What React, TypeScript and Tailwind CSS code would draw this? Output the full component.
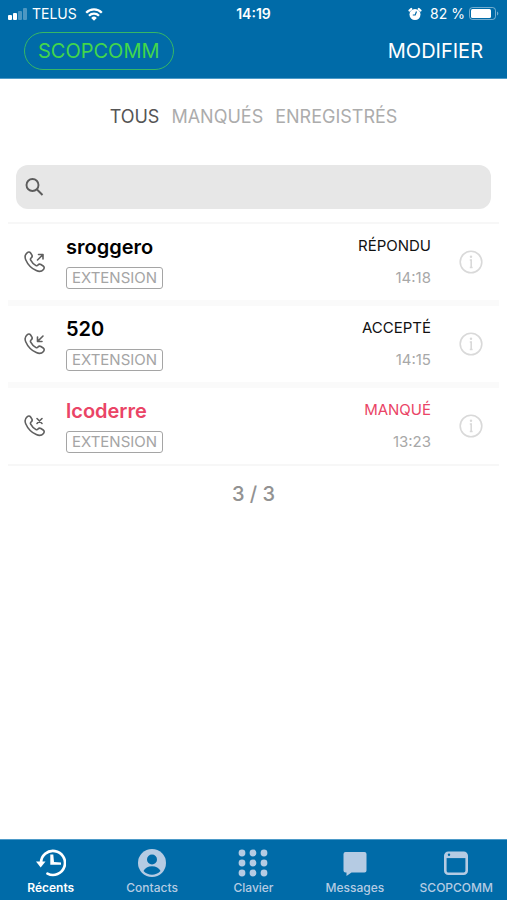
import React from 'react';

type CallKind = 'outgoing' | 'incoming' | 'missed';

interface Call {
  name: string;
  kind: CallKind;
  status: string;
  time: string;
}

const calls: Call[] = [
  { name: 'sroggero', kind: 'outgoing', status: 'RÉPONDU', time: '14:18' },
  { name: '520', kind: 'incoming', status: 'ACCEPTÉ', time: '14:15' },
  { name: 'lcoderre', kind: 'missed', status: 'MANQUÉ', time: '13:23' },
];

// Small mark drawn at the top right of the handset
const callMarks: Record<CallKind, string> = {
  outgoing: 'M13.500 9 19 3.500M14.500 3.500H19V8',
  incoming: 'M19 3l-5.500 5.500M13.500 4v4.500H18',
  missed: 'M13 3.500l5 5M18 3.500l-5 5',
};

const CallIcon: React.FC<{ kind: CallKind }> = ({ kind }) => (
  <svg viewBox="0 0 22 22" className="h-[22px] w-[22px] text-[#606060]" fill="none" stroke="currentColor" strokeWidth="1.600" strokeLinecap="round" strokeLinejoin="round" aria-hidden="true">
    <path d="M3.100 1.800C4.300.8 5.700.8 6.600 2l1.200 1.900c.7 1.200.4 2.200-.6 3-.9.7-1 1.300-.5 2.200 1.200 2.300 2.800 4 5 5.300.9.6 1.600.5 2.300-.4.8-1 1.800-1.200 2.900-.5l2.300 1.500c1.200.8 1.300 2.200.3 3.400-1.900 2.300-4.400 2.500-7.200 1.200C7.600 17.500 3.600 13.100 1.700 8.700.6 6 1 3.600 3.100 1.800Z" />
    <path d={callMarks[kind]} />
  </svg>
);

/* Status bar */
const StatusBar: React.FC = () => (
  <div className="grid h-7 grid-cols-3 items-center px-2 text-sm leading-5">
    <div className="flex items-center gap-1">
      <svg viewBox="0 0 20 12" className="h-3 w-5" fill="currentColor" aria-hidden="true">
        <rect x="0" y="7" width="4" height="5" rx="1" />
        <rect x="5" y="5" width="4" height="7" rx="1" />
        <rect x="10" y="3" width="4" height="9" rx="1" opacity=".3" />
        <rect x="15" y="0" width="4" height="12" rx="1" opacity=".3" />
      </svg>
      <span>TELUS</span>
      <svg viewBox="0 0 18 13" className="ml-1 h-[13px] w-[18px]" fill="none" stroke="currentColor" strokeWidth="2.300" aria-hidden="true">
        <path d="M1.200 4.700a11 11 0 0 1 15.600 0" />
        <path d="M4 7.700a7.100 7.100 0 0 1 10 0" />
        <path d="M9 12.700 6.200 9.900a4 4 0 0 1 5.600 0Z" fill="currentColor" stroke="none" />
      </svg>
    </div>
    <span className="text-center font-semibold">14:19</span>
    <div className="flex items-center justify-end gap-1">
      <svg viewBox="0 0 14 14" className="mr-1 h-[14px] w-[14px]" aria-hidden="true">
        <circle cx="7" cy="7.500" r="5.500" fill="currentColor" />
        <path d="M1.500 3.500 3.200 2M12.500 3.500 10.800 2" stroke="currentColor" strokeWidth="2.200" strokeLinecap="round" />
        <path d="M8.500 4.500 7.200 8H4.800" fill="none" stroke="#006ba8" strokeWidth="1.200" />
      </svg>
      <span className="whitespace-nowrap">82 %</span>
      <svg viewBox="0 0 30 14" className="h-[14px] w-[30px]" aria-hidden="true">
        <rect x=".5" y=".5" width="26" height="12" rx="3" fill="none" stroke="currentColor" opacity=".45" />
        <rect x="2" y="2" width="20" height="9" rx="1.500" fill="currentColor" />
        <path d="M28 4.500c1.800.8 1.800 3.200 0 4Z" fill="currentColor" opacity=".45" />
      </svg>
    </div>
  </div>
);

const Header: React.FC = () => (
  <header className="border-b border-[#4d9bc9] bg-[#006ba8] text-white">
    <StatusBar />
    <div className="flex items-center justify-between px-6 pt-1 pb-2 text-xl">
      <button className="h-[38px] rounded-full border border-[#35b766] px-[13px] text-[#42d64b]">SCOPCOMM</button>
      <button className="h-[38px]">MODIFIER</button>
    </div>
  </header>
);

const CallRow: React.FC<{ call: Call }> = ({ call }) => {
  const missed = call.kind === 'missed';

  return (
    <li className="flex h-[76px] items-center bg-white px-4">
      <CallIcon kind={call.kind} />
      <div className="ml-5 flex flex-1 flex-col items-start gap-2">
        <span className={`text-xl leading-6 font-semibold ${missed ? 'text-[#ea4466]' : 'text-black'}`}>{call.name}</span>
        <span className="rounded-[3px] border border-[#a5a5a5] px-[5px] text-[15px] leading-5 text-[#a5a5a5]">EXTENSION</span>
      </div>
      <div className="flex flex-col items-end gap-3 text-[15px] leading-5">
        <span className={missed ? 'text-[#ea4466]' : 'text-[#111]'}>{call.status}</span>
        <span className="text-[#a8a8a8]">{call.time}</span>
      </div>
      <button aria-label={`Détails ${call.name}`} className="ml-7 text-[#d9d9d9]">
        <svg viewBox="0 0 24 24" className="h-6 w-6" fill="none" stroke="currentColor" strokeWidth="1.600" aria-hidden="true">
          <circle cx="12" cy="12" r="10.800" />
          <path d="M10.800 10h1.400v7.500M10.800 17.500h2.800" />
          <circle cx="12" cy="6.800" r="1.200" fill="currentColor" stroke="none" />
        </svg>
      </button>
    </li>
  );
};

/* Bottom tab icons */
const RecentsIcon = () => (
  <svg viewBox="0 0 30 28" className="h-7 w-[30px]" fill="none" stroke="currentColor" strokeWidth="2.700" aria-hidden="true">
    <path d="M5 14A12 12 0 1 1 11.500 24.600" strokeLinecap="round" />
    <path d="M0 12.500h9.500L4.700 18.500Z" fill="currentColor" stroke="none" />
    <path d="M14.300 5.500h3l.7 7.500 7 .5v2.300H14.300Z" fill="currentColor" stroke="none" />
  </svg>
);

const ContactsIcon = () => (
  <svg viewBox="0 0 28 28" className="h-7 w-7" aria-hidden="true">
    <circle cx="14" cy="14" r="14" fill="currentColor" />
    <circle cx="14" cy="10.500" r="5" fill="#006ba8" />
    <path d="M5.500 22c1.500-3.300 4.500-4.800 8.500-4.800s7 1.500 8.500 4.800c-4.800 5-12.200 5-17 0Z" fill="#006ba8" />
  </svg>
);

const KeypadIcon = () => (
  <svg viewBox="0 0 30 28" className="h-7 w-[30px]" fill="currentColor" aria-hidden="true">
    {[4, 15, 26].map((cx) => [4, 14, 24].map((cy) => <circle key={`${cx}-${cy}`} cx={cx} cy={cy} r="3.400" />))}
  </svg>
);

const MessagesIcon = () => (
  <svg viewBox="0 0 24 28" className="h-7 w-6" fill="currentColor" aria-hidden="true">
    <path d="M2.500 3h19a2 2 0 0 1 2 2V21.500a2 2 0 0 1-2 2H8.500l-5 3.500V23.500h-1a2 2 0 0 1-2-2V5a2 2 0 0 1 2-2Z" />
  </svg>
);

const WindowIcon = () => (
  <svg viewBox="0 0 24 28" className="h-7 w-6" aria-hidden="true">
    <rect x="1.300" y="3.800" width="21.400" height="21" rx="3" fill="none" stroke="currentColor" strokeWidth="2.600" />
    <path d="M2 4.100h20v5H2Z" fill="currentColor" />
    <circle cx="5" cy="5.800" r="1.200" fill="#006ba8" />
  </svg>
);

const tabs = [
  { label: 'Récents', icon: <RecentsIcon />, active: true },
  { label: 'Contacts', icon: <ContactsIcon />, active: false },
  { label: 'Clavier', icon: <KeypadIcon />, active: false },
  { label: 'Messages', icon: <MessagesIcon />, active: false },
  { label: 'SCOPCOMM', icon: <WindowIcon />, active: false },
];

const App: React.FC = () => (
  <div className="flex min-h-screen flex-col bg-white font-['Inter','Liberation_Sans',sans-serif]">
    <Header />

    <main className="flex-1">
      <div className="flex justify-center gap-3 pt-[26px] text-lg leading-6">
        <button className="text-[#555]">TOUS</button>
        <button className="text-[#acacac]">MANQUÉS</button>
        <button className="text-[#acacac]">ENREGISTRÉS</button>
      </div>

      <label className="mx-4 mt-9 flex h-11 items-center rounded-xl bg-[#e7e7e7] px-2">
        <svg viewBox="0 0 20 20" className="h-5 w-5 shrink-0 text-[#5c5c5c]" fill="none" stroke="currentColor" strokeWidth="1.900" aria-hidden="true">
          <circle cx="8.500" cy="8" r="6" />
          <path d="m13 12.500 5.500 5.500" />
        </svg>
        <input type="search" aria-label="Rechercher" className="min-w-0 flex-1 bg-transparent px-2 text-base outline-none" />
      </label>

      <ul className="mx-2 mt-[13px] flex flex-col gap-[6px] border-y-2 border-[#f7f7f7] bg-[#fafafa]">
        {calls.map((call) => (
          <CallRow key={call.name} call={call} />
        ))}
      </ul>

      <p className="mt-3 text-center text-xl leading-8 font-medium text-[#929292]">3 / 3</p>
    </main>

    <nav className="grid grid-cols-5 border-t border-[#4d9bc9] bg-[#006ba8] pt-[9px] pb-1">
      {tabs.map((tab) => (
        <button
          key={tab.label}
          className={`flex flex-col items-center gap-[3px] text-xs leading-4 ${tab.active ? 'font-semibold text-white' : 'font-medium text-[#b5cbe3]'}`}
        >
          {tab.icon}
          {tab.label}
        </button>
      ))}
    </nav>
  </div>
);

export default App;
